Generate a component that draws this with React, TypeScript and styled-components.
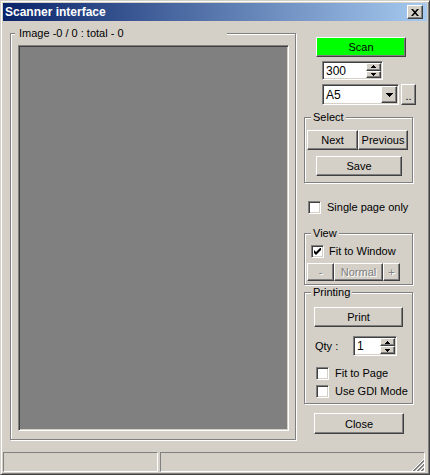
import React from "react";
import styled, { createGlobalStyle, css } from "styled-components";

const Global = createGlobalStyle`
  html, body { margin: 0; padding: 0; background: #d4d0c8; }
  #root { width: 430px; height: 475px; }
`;

const raised = css`
  box-sizing: border-box;
  border: 1px solid;
  border-color: #fff #404040 #404040 #fff;
  box-shadow: inset -1px -1px #808080;
`;

const sunken = css`
  box-sizing: border-box;
  border: 1px solid;
  border-color: #808080 #fff #fff #808080;
  box-shadow: inset 1px 1px #404040, inset -1px -1px #d4d0c8;
`;

const Window = styled.div`
  box-sizing: border-box;
  width: 430px;
  height: 475px;
  background: #d4d0c8;
  border: 1px solid;
  border-color: #d4d0c8 #404040 #404040 #d4d0c8;
  box-shadow: inset 1px 1px #fff, inset -1px -1px #808080;
  padding: 2px;
  display: flex;
  flex-direction: column;
  color: #000;
  font-family: "Liberation Sans", Arial, sans-serif;
  font-size: 11px;
`;

const TitleBar = styled.div`
  height: 18px;
  flex: none;
  display: flex;
  align-items: center;
  padding: 0 4px 0 2px;
  background: linear-gradient(to right, #0a246a, #a6caf0);
  color: #fff;
  font-weight: bold;
  font-size: 12px;
`;

const TitleClose = styled.div`
  ${raised};
  width: 16px;
  height: 14px;
  margin-left: auto;
  background: #d4d0c8;
  display: flex;
  align-items: center;
  justify-content: center;
`;

const Body = styled.div`
  flex: 1;
  display: flex;
  align-items: flex-start;
  gap: 8px;
  padding: 12px 0 0 7px;
`;

const GroupBox = styled.div<{ $w: number; $h: number; $mt?: number }>`
  box-sizing: border-box;
  width: ${(p) => p.$w}px;
  height: ${(p) => p.$h}px;
  margin-top: ${(p) => p.$mt ?? 0}px;
  border: 1px solid #808080;
  box-shadow: 1px 1px #fff, inset 1px 1px #fff;
  display: flex;
  flex-direction: column;
  align-items: flex-start;
  flex: none;
`;

const GroupLabel = styled.div<{ $ml: number; $w?: number; $pl?: number }>`
  box-sizing: border-box;
  margin-top: -7px;
  margin-left: ${(p) => p.$ml}px;
  padding: 0 2px 0 ${(p) => p.$pl ?? 2}px;
  ${(p) => (p.$w ? `width: ${p.$w}px;` : "")}
  height: 13px;
  line-height: 13px;
  background: #d4d0c8;
  white-space: nowrap;
`;

const ImageArea = styled.div`
  box-sizing: border-box;
  width: 271px;
  height: 386px;
  margin: 5px 0 0 7px;
  background: #808080;
  border: 1px solid;
  border-color: #808080 #fff #fff #808080;
  box-shadow: inset 1px 1px #404040, inset -1px -1px #d4d0c8;
`;

const Side = styled.div`
  width: 112px;
  display: flex;
  flex-direction: column;
  align-items: flex-start;
`;

const Button = styled.button<{
  $w: number;
  $h: number;
  $ml?: number;
  $mt?: number;
  $bg?: string;
  $off?: boolean;
}>`
  ${raised};
  width: ${(p) => p.$w}px;
  height: ${(p) => p.$h}px;
  margin: ${(p) => p.$mt ?? 0}px 0 0 ${(p) => p.$ml ?? 0}px;
  padding: 0;
  flex: none;
  background: ${(p) => p.$bg ?? "#d4d0c8"};
  font-family: inherit;
  font-size: 11px;
  color: ${(p) => (p.$off ? "#808080" : "#000")};
  text-shadow: ${(p) => (p.$off ? "1px 1px 0 #fff" : "none")};
  outline: none;
  cursor: default;
`;

const Row = styled.div<{ $ml?: number; $mt?: number; $gap?: number }>`
  display: flex;
  align-items: center;
  margin: ${(p) => p.$mt ?? 0}px 0 0 ${(p) => p.$ml ?? 0}px;
  gap: ${(p) => p.$gap ?? 0}px;
`;

const Field = styled.div<{ $w: number; $h: number; $ml?: number }>`
  ${sunken};
  width: ${(p) => p.$w}px;
  height: ${(p) => p.$h}px;
  margin-left: ${(p) => p.$ml ?? 0}px;
  padding: 1px;
  background: #fff;
  display: flex;
  flex: none;
`;

const FieldText = styled.div`
  flex: 1;
  display: flex;
  align-items: center;
  padding-left: 2px;
  font-size: 12px;
`;

const SpinButtons = styled.div`
  width: 15px;
  display: flex;
  flex-direction: column;
`;

const SpinButton = styled.div`
  ${raised};
  flex: 1;
  background: #d4d0c8;
  display: flex;
  align-items: center;
  justify-content: center;
`;

const DropButton = styled.div`
  ${raised};
  width: 16px;
  background: #d4d0c8;
  display: flex;
  align-items: center;
  justify-content: center;
`;

const DotsButton = styled.div`
  ${raised};
  width: 15px;
  height: 21px;
  background: #d4d0c8;
  display: flex;
  align-items: flex-end;
  justify-content: center;
  padding-bottom: 4px;
  line-height: 8px;
`;

const CheckBox = styled.div`
  ${sunken};
  width: 13px;
  height: 13px;
  background: #fff;
  flex: none;
  display: flex;
  align-items: center;
  justify-content: center;
`;

const CheckText = styled.span`
  line-height: 13px;
  white-space: nowrap;
`;

const QtyLabel = styled.span`
  width: 38px;
  line-height: 13px;
`;

const StatusBar = styled.div`
  height: 20px;
  flex: none;
  display: flex;
  gap: 2px;
`;

const StatusPanel = styled.div<{ $w: number }>`
  box-sizing: border-box;
  width: ${(p) => p.$w}px;
  height: 20px;
  border: 1px solid;
  border-color: #808080 #fff #fff #808080;
  display: flex;
  align-items: flex-end;
  justify-content: flex-end;
`;

const Arrow = ({ up, w = 5 }: { up?: boolean; w?: number }) => {
  const h = Math.ceil(w / 2);
  return (
    <svg width={w} height={h} viewBox={`0 0 ${w} ${h}`} shapeRendering="crispEdges">
      <polygon points={up ? `0,${h} ${w},${h} ${w / 2},0` : `0,0 ${w},0 ${w / 2},${h}`} fill="#000" />
    </svg>
  );
};

const Check = ({ checked, label }: { checked?: boolean; label: string }) => (
  <>
    <CheckBox>
      {checked && (
        <svg width="7" height="7" viewBox="0 0 7 7">
          <polygon points="0,2 2,4 7,-1 7,2 2,7 0,5" fill="#000" />
        </svg>
      )}
    </CheckBox>
    <CheckText>{label}</CheckText>
  </>
);

const Spin = ({ value, w, h, ml }: { value: string; w: number; h: number; ml?: number }) => (
  <Field $w={w} $h={h} $ml={ml}>
    <FieldText>{value}</FieldText>
    <SpinButtons>
      <SpinButton>
        <Arrow up />
      </SpinButton>
      <SpinButton>
        <Arrow />
      </SpinButton>
    </SpinButtons>
  </Field>
);

const Grip = () => (
  <svg width="12" height="12" viewBox="0 0 12 12" shapeRendering="crispEdges">
    {[0, 4, 8].map((k) => (
      <g key={k}>
        <line x1={k} y1={12} x2={12} y2={k} stroke="#fff" />
        <line x1={k + 1} y1={12} x2={12} y2={k + 1} stroke="#808080" />
        <line x1={k + 2} y1={12} x2={12} y2={k + 2} stroke="#808080" />
      </g>
    ))}
  </svg>
);

export default function App() {
  return (
    <>
      <Global />
      <Window>
        <TitleBar>
          Scanner interface
          <TitleClose>
            <svg width="8" height="7" viewBox="0 0 8 7">
              <polygon points="0,0 2,0 4,2.3 6,0 8,0 5,3.5 8,7 6,7 4,4.7 2,7 0,7 3,3.5" fill="#000" />
            </svg>
          </TitleClose>
        </TitleBar>
        <Body>
          <GroupBox $w={286} $h={407}>
            <GroupLabel $ml={4} $pl={4} $w={212}>
              Image -0 / 0 : total - 0
            </GroupLabel>
            <ImageArea />
          </GroupBox>
          <Side>
            <Button $w={90} $h={20} $ml={12} $mt={4} $bg="#00ff00">
              Scan
            </Button>
            <Row $ml={18} $mt={4}>
              <Spin value="300" w={61} h={19} />
            </Row>
            <Row $ml={18} $mt={4} $gap={2}>
              <Field $w={77} $h={21}>
                <FieldText>A5</FieldText>
                <DropButton>
                  <Arrow w={7} />
                </DropButton>
              </Field>
              <DotsButton>..</DotsButton>
            </Row>
            <GroupBox $w={109} $h={66} $mt={12}>
              <GroupLabel $ml={6}>Select</GroupLabel>
              <Row $ml={2} $mt={6}>
                <Button $w={51} $h={20}>
                  Next
                </Button>
                <Button $w={50} $h={20}>
                  Previous
                </Button>
              </Row>
              <Button $w={86} $h={20} $ml={11} $mt={6}>
                Save
              </Button>
            </GroupBox>
            <Row $ml={4} $mt={18} $gap={6}>
              <Check label="Single page only" />
            </Row>
            <GroupBox $w={109} $h={52} $mt={19}>
              <GroupLabel $ml={6}>View</GroupLabel>
              <Row $ml={6} $mt={5} $gap={5}>
                <Check checked label="Fit to Window" />
              </Row>
              <Row $ml={2} $mt={5}>
                <Button $w={27} $h={18} $off>
                  -
                </Button>
                <Button $w={49} $h={18} $off>
                  Normal
                </Button>
                <Button $w={17} $h={18} $off>
                  +
                </Button>
              </Row>
            </GroupBox>
            <GroupBox $w={109} $h={112} $mt={7}>
              <GroupLabel $ml={6}>Printing</GroupLabel>
              <Button $w={89} $h={20} $ml={9} $mt={8}>
                Print
              </Button>
              <Row $ml={10} $mt={9}>
                <QtyLabel>Qty :</QtyLabel>
                <Spin value="1" w={44} h={20} />
              </Row>
              <Row $ml={11} $mt={11} $gap={6}>
                <Check label="Fit to Page" />
              </Row>
              <Row $ml={11} $mt={5} $gap={6}>
                <Check label="Use GDI Mode" />
              </Row>
            </GroupBox>
            <Button $w={90} $h={21} $ml={10} $mt={9}>
              Close
            </Button>
          </Side>
        </Body>
        <StatusBar>
          <StatusPanel $w={155} />
          <StatusPanel $w={265}>
            <Grip />
          </StatusPanel>
        </StatusBar>
      </Window>
    </>
  );
}
